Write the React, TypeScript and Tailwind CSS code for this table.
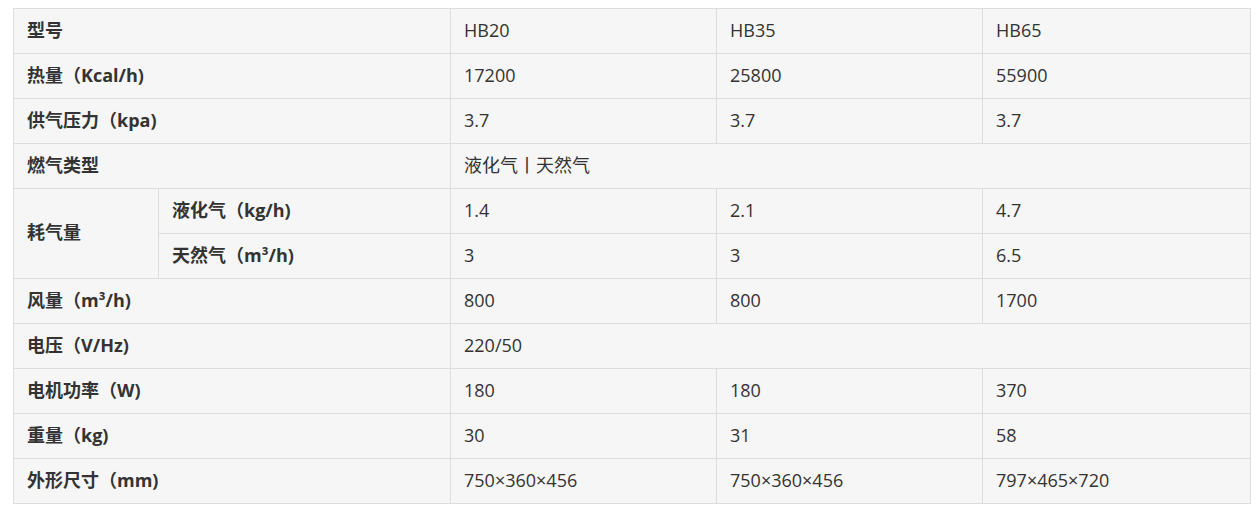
import React from 'react';

type Row = {
  label: string;
  values: string[];
};

const rowsTop: Row[] = [
  { label: '型号', values: ['HB20', 'HB35', 'HB65'] },
  { label: '热量（Kcal/h)', values: ['17200', '25800', '55900'] },
  { label: '供气压力（kpa)', values: ['3.7', '3.7', '3.7'] },
];

const rowsBottom: Row[] = [
  { label: '风量（m³/h)', values: ['800', '800', '1700'] },
  { label: '电压（V/Hz)', values: ['220/50'] },
  { label: '电机功率（W)', values: ['180', '180', '370'] },
  { label: '重量（kg)', values: ['30', '31', '58'] },
  { label: '外形尺寸（mm)', values: ['750×360×456', '750×360×456', '797×465×720'] },
];

const cell = 'h-[45px] border border-[#dddddd] px-[13px] pt-0 pb-[3px] align-middle';
const head = `${cell} font-bold`;

const ValueCells = ({ values }: { values: string[] }) =>
  values.length === 1 ? (
    <td className={cell} colSpan={3}>
      {values[0]}
    </td>
  ) : (
    <>
      {values.map((v, i) => (
        <td key={i} className={cell}>
          {v}
        </td>
      ))}
    </>
  );

export default function App() {
  return (
    <div className="min-h-screen bg-white pl-[13px] pt-[8px] font-['Open_Sans','Noto_Sans_CJK_SC',sans-serif] text-[18px] text-[#333333]">
      <table className="w-[1237px] table-fixed border-collapse bg-[#f6f6f6] leading-none">
        <colgroup>
          <col className="w-[145px]" />
          <col className="w-[292px]" />
          <col className="w-[266px]" />
          <col className="w-[266px]" />
          <col className="w-[268px]" />
        </colgroup>
        <tbody>
          {rowsTop.map((r) => (
            <tr key={r.label}>
              <td className={head} colSpan={2}>
                {r.label}
              </td>
              <ValueCells values={r.values} />
            </tr>
          ))}
          <tr>
            <td className={head} colSpan={2}>
              燃气类型
            </td>
            <td className={cell} colSpan={3}>
              液化气丨天然气
            </td>
          </tr>
          <tr>
            <td className={head} rowSpan={2}>
              耗气量
            </td>
            <td className={head}>液化气（kg/h)</td>
            <ValueCells values={['1.4', '2.1', '4.7']} />
          </tr>
          <tr>
            <td className={head}>天然气（m³/h)</td>
            <ValueCells values={['3', '3', '6.5']} />
          </tr>
          {rowsBottom.map((r) => (
            <tr key={r.label}>
              <td className={head} colSpan={2}>
                {r.label}
              </td>
              <ValueCells values={r.values} />
            </tr>
          ))}
        </tbody>
      </table>
    </div>
  );
}
